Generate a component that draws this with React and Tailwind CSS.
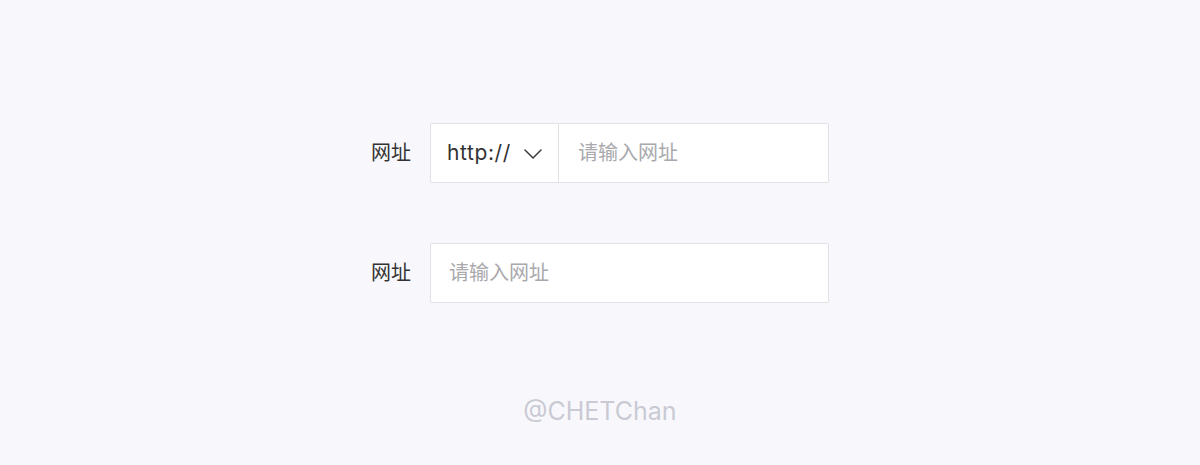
const font = { fontFamily: 'Inter, "Noto Sans CJK SC", sans-serif' };

function Chevron() {
  return (
    <svg width="18" height="10" viewBox="0 0 18 10" className="ml-[13px] mt-[2px]" fill="none">
      <polyline points="1,1 9,9 17,1" stroke="#3a3a3a" strokeWidth="1.5" strokeLinecap="round" strokeLinejoin="round" />
    </svg>
  );
}

function UrlRow({ withProtocol }) {
  return (
    <div className="flex items-center">
      <span className="w-[41px] mr-[18px] text-[20px] text-[#333] whitespace-nowrap">网址</span>
      <div className="flex w-[399px] h-[60px] bg-white border border-[#e1e1e6] rounded-[2px]">
        {withProtocol && (
          <div className="flex items-center w-[128px] border-r border-[#e1e1e6] pl-[16px]">
            <span className="text-[21px] tracking-[0.6px] text-[#333]">http://</span>
            <Chevron />
          </div>
        )}
        <input
          type="text"
          placeholder="请输入网址"
          className={`flex-1 min-w-0 bg-transparent outline-none text-[20px] text-[#333] placeholder:text-[#a9a9ad] ${
            withProtocol ? "pl-[19px]" : "pl-[18px]"
          }`}
        />
      </div>
    </div>
  );
}

export default function App() {
  return (
    <div className="w-full h-[465px] bg-[#f8f8fc] flex flex-col items-center pt-[123px]" style={font}>
      <div className="flex flex-col gap-[60px]">
        <UrlRow withProtocol />
        <UrlRow />
      </div>
      <div className="mt-[90px] text-[25px] text-[#c9cad4]">@CHETChan</div>
    </div>
  );
}
